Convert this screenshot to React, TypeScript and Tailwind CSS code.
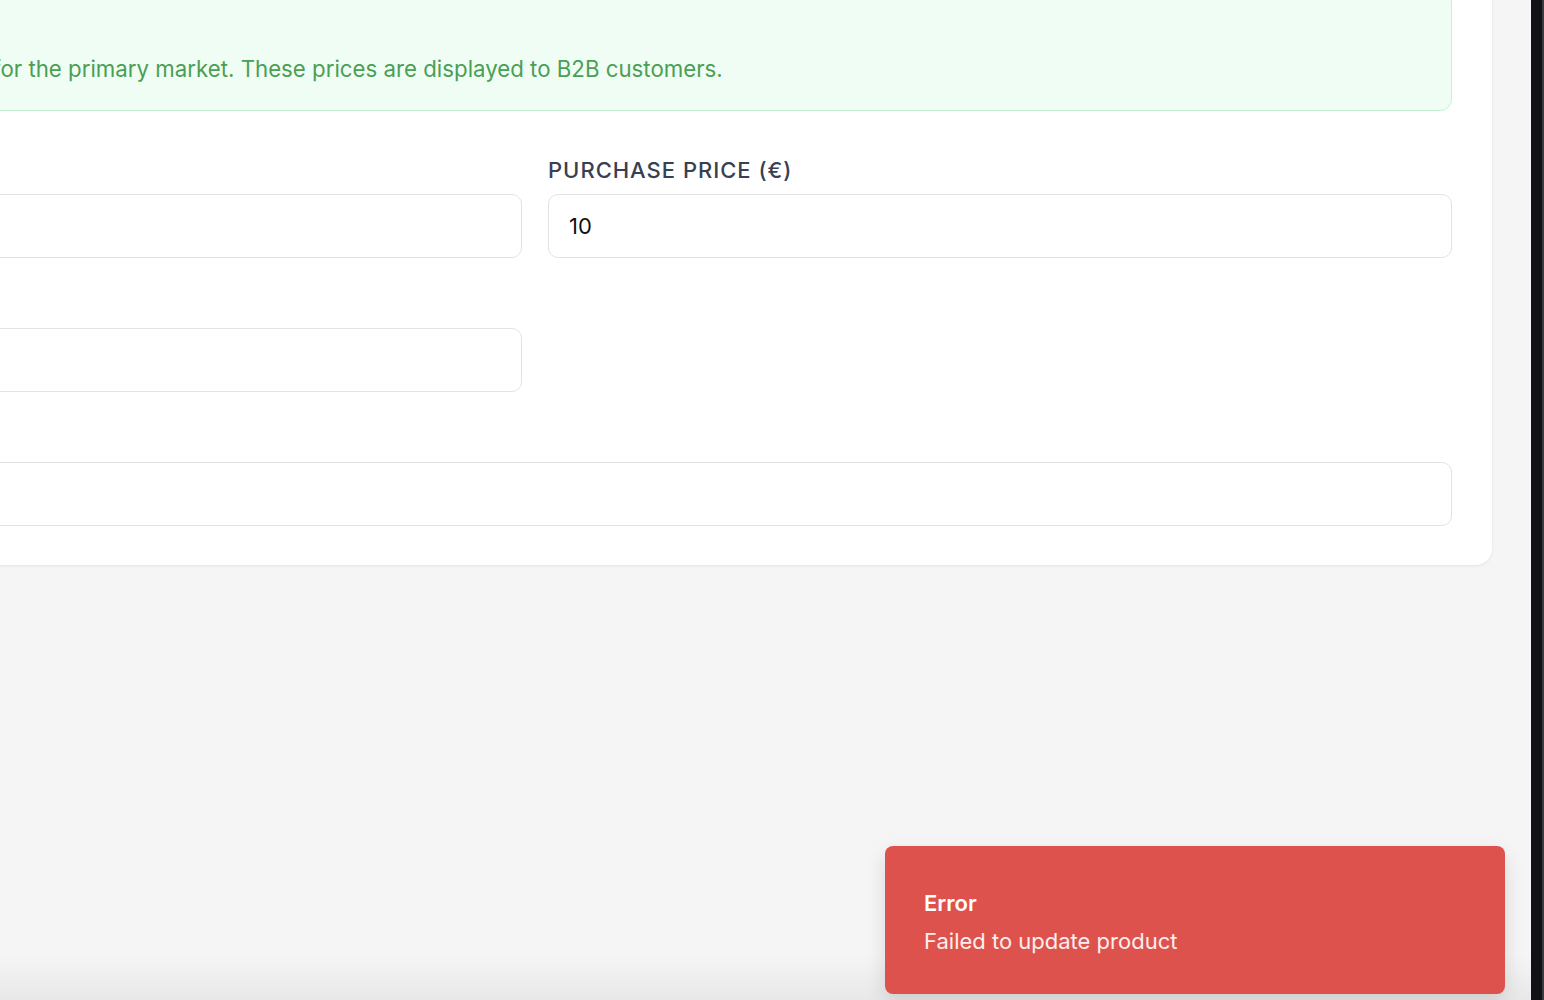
export default function App() {
  return (
    <div className="relative flex h-[1000px] w-full overflow-hidden bg-[#f5f5f5] font-['Inter',sans-serif]">
      {/* Main content */}
      <main className="flex-1 overflow-hidden pr-[39px]">
        <section className="-mt-[50px] ml-[-422px] rounded-2xl bg-white px-10 pb-[39px] pt-10 shadow-[0_1px_3px_rgba(0,0,0,0.08)]">
          <div className="rounded-xl border border-[#c6f1d1] bg-[#f0fdf4] pb-[27px] pl-[82px] pr-[30px] pt-[26px]">
            <h3 className="mb-[6px] text-[22px] font-semibold leading-8 text-[#2f7d3b]">Base Pricing</h3>
            <p className="whitespace-nowrap text-[22.25px] leading-7 text-[#4a9f55]">
              Set the default sales prices for the primary market. These prices are displayed to B2B customers.
            </p>
          </div>

          <div className="mt-[47px] grid grid-cols-2 gap-x-[26px] gap-y-[34px]">
            <Field label="Selling Price (€)" value="12" />
            <Field label="Purchase Price (€)" value="10" />
            <Field label="VAT Rate (%)" value="" />
            <div />
            <div className="col-span-2">
              <Field label="Price Notes" value="" />
            </div>
          </div>
        </section>
      </main>

      {/* Right edge bar */}
      <div className="flex w-[13px] shrink-0 bg-[#111215]">
        <div className="ml-auto w-[2px] bg-[#3b3c40]" />
      </div>

      {/* Bottom fade */}
      <div className="pointer-events-none absolute bottom-0 left-0 right-[13px] h-[45px] bg-gradient-to-b from-transparent to-[#e8e8e8]" />

      {/* Toast */}
      <div className="absolute bottom-[6px] right-[39px] w-[620px] rounded-lg bg-[#dd524c] px-[39px] pb-[39px] pt-[43px] shadow-[0_8px_20px_rgba(0,0,0,0.12)]">
        <div className="text-[22px] font-semibold leading-7 text-white">Error</div>
        <div className="mt-[10px] text-[22px] leading-7 text-white/90">Failed to update product</div>
      </div>
    </div>
  )
}

function Field({ label, value }: { label: string; value: string }) {
  return (
    <div>
      <label className="mb-3 block text-[22px] font-medium uppercase leading-6 tracking-[0.045em] text-[#374151]">
        {label}
      </label>
      <input
        readOnly
        value={value}
        className="h-[64px] w-full rounded-[10px] border border-[#e3e3e3] bg-white px-5 text-[22px] text-[#111] outline-none"
      />
    </div>
  )
}
